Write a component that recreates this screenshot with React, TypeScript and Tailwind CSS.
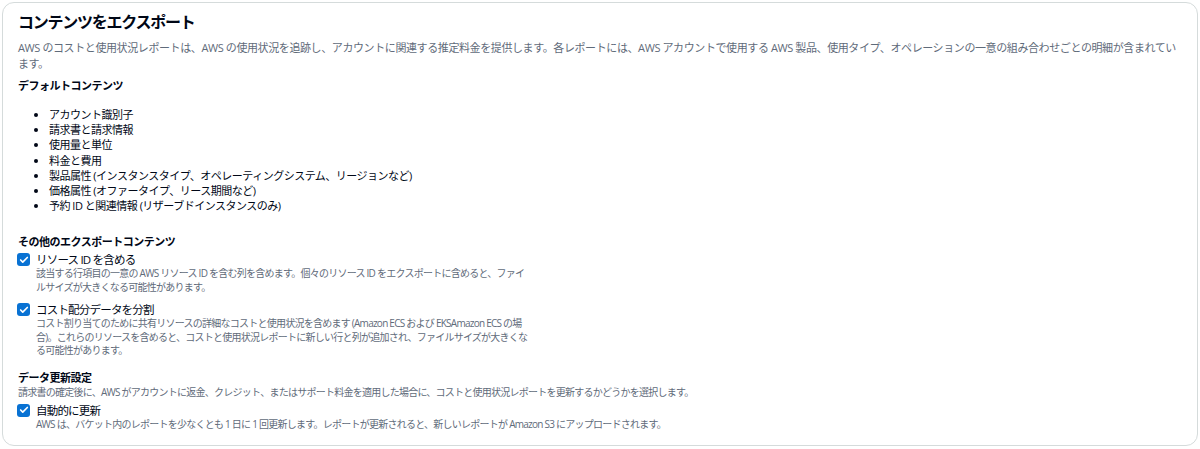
import { Check } from 'lucide-react'

const defaultItems = [
  'アカウント識別子',
  '請求書と請求情報',
  '使用量と単位',
  '料金と費用',
  '製品属性 (インスタンスタイプ、オペレーティングシステム、リージョンなど)',
  '価格属性 (オファータイプ、リース期間など)',
  '予約 ID と関連情報 (リザーブドインスタンスのみ)',
]

function CheckRow({ label, wide, children }: { label: string; wide?: boolean; children: React.ReactNode }) {
  return (
    <div className="flex items-start">
      <span className="mt-[1px] ml-[-1px] flex h-[13px] w-[13px] shrink-0 items-center justify-center rounded-[3px] bg-[#0972d3]">
        <Check className="h-[10px] w-[10px] text-white" strokeWidth={4} />
      </span>
      <div className="ml-[6px]">
        <div className="text-[11.5px] leading-[15px] tracking-[-0.8px] text-[#000716]">{label}</div>
        <div className={wide ? 'text-[10px] leading-[13.5px] tracking-[-0.75px] text-[#5f6b7a]' : 'w-[493px] text-[10px] leading-[13.5px] tracking-[-0.75px] text-[#5f6b7a]'}>
          {children}
        </div>
      </div>
    </div>
  )
}

export default function App() {
  return (
    <div className="bg-white p-[2px] font-['Open_Sans','Noto_Sans_CJK_JP',sans-serif]">
      <div className="h-[444px] rounded-xl border border-[#d5dbdb] bg-white px-[15px] pt-[7px]">
        <h1 className="text-[16px] font-bold leading-[24px] tracking-[-1.25px] text-[#000716]">コンテンツをエクスポート</h1>
        <p className="mt-[6px] text-[11px] leading-[16px] tracking-[-0.4px] text-[#5f6b7a]">
          AWS のコストと使用状況レポートは、AWS の使用状況を追跡し、アカウントに関連する推定料金を提供します。各レポートには、AWS アカウントで使用する AWS 製品、使用タイプ、オペレーションの一意の組み合わせごとの明細が含まれています。
        </p>

        <h2 className="mt-[6px] text-[11px] font-bold leading-[16px] tracking-[-0.5px] text-[#000716]">デフォルトコンテンツ</h2>
        <ul className="mt-[13px] list-disc pl-[31px] text-[11px] leading-[15.2px] tracking-[-0.5px] text-[#000716]">
          {defaultItems.map((item) => (
            <li key={item}>{item}</li>
          ))}
        </ul>

        <h2 className="mt-[21px] text-[11px] font-bold leading-[16px] tracking-[-0.5px] text-[#000716]">その他のエクスポートコンテンツ</h2>
        <div className="mt-[2px]">
          <CheckRow label="リソース ID を含める">
            該当する行項目の一意の AWS リソース ID を含む列を含めます。個々のリソース ID をエクスポートに含めると、ファイルサイズが大きくなる可能性があります。
          </CheckRow>
        </div>
        <div className="mt-[8px]">
          <CheckRow label="コスト配分データを分割">
            コスト割り当てのために共有リソースの詳細なコストと使用状況を含めます (Amazon ECS および EKSAmazon ECS の場合)。これらのリソースを含めると、コストと使用状況レポートに新しい行と列が追加され、ファイルサイズが大きくなる可能性があります。
          </CheckRow>
        </div>

        <h2 className="mt-[12px] text-[11px] font-bold leading-[15px] tracking-[-0.5px] text-[#000716]">データ更新設定</h2>
        <p className="text-[10px] leading-[14px] tracking-[-0.75px] text-[#5f6b7a]">
          請求書の確定後に、AWS がアカウントに返金、クレジット、またはサポート料金を適用した場合に、コストと使用状況レポートを更新するかどうかを選択します。
        </p>
        <div className="mt-[4px]">
          <CheckRow label="自動的に更新" wide>
            AWS は、バケット内のレポートを少なくとも 1 日に 1 回更新します。レポートが更新されると、新しいレポートが Amazon S3 にアップロードされます。
          </CheckRow>
        </div>
      </div>
    </div>
  )
}
